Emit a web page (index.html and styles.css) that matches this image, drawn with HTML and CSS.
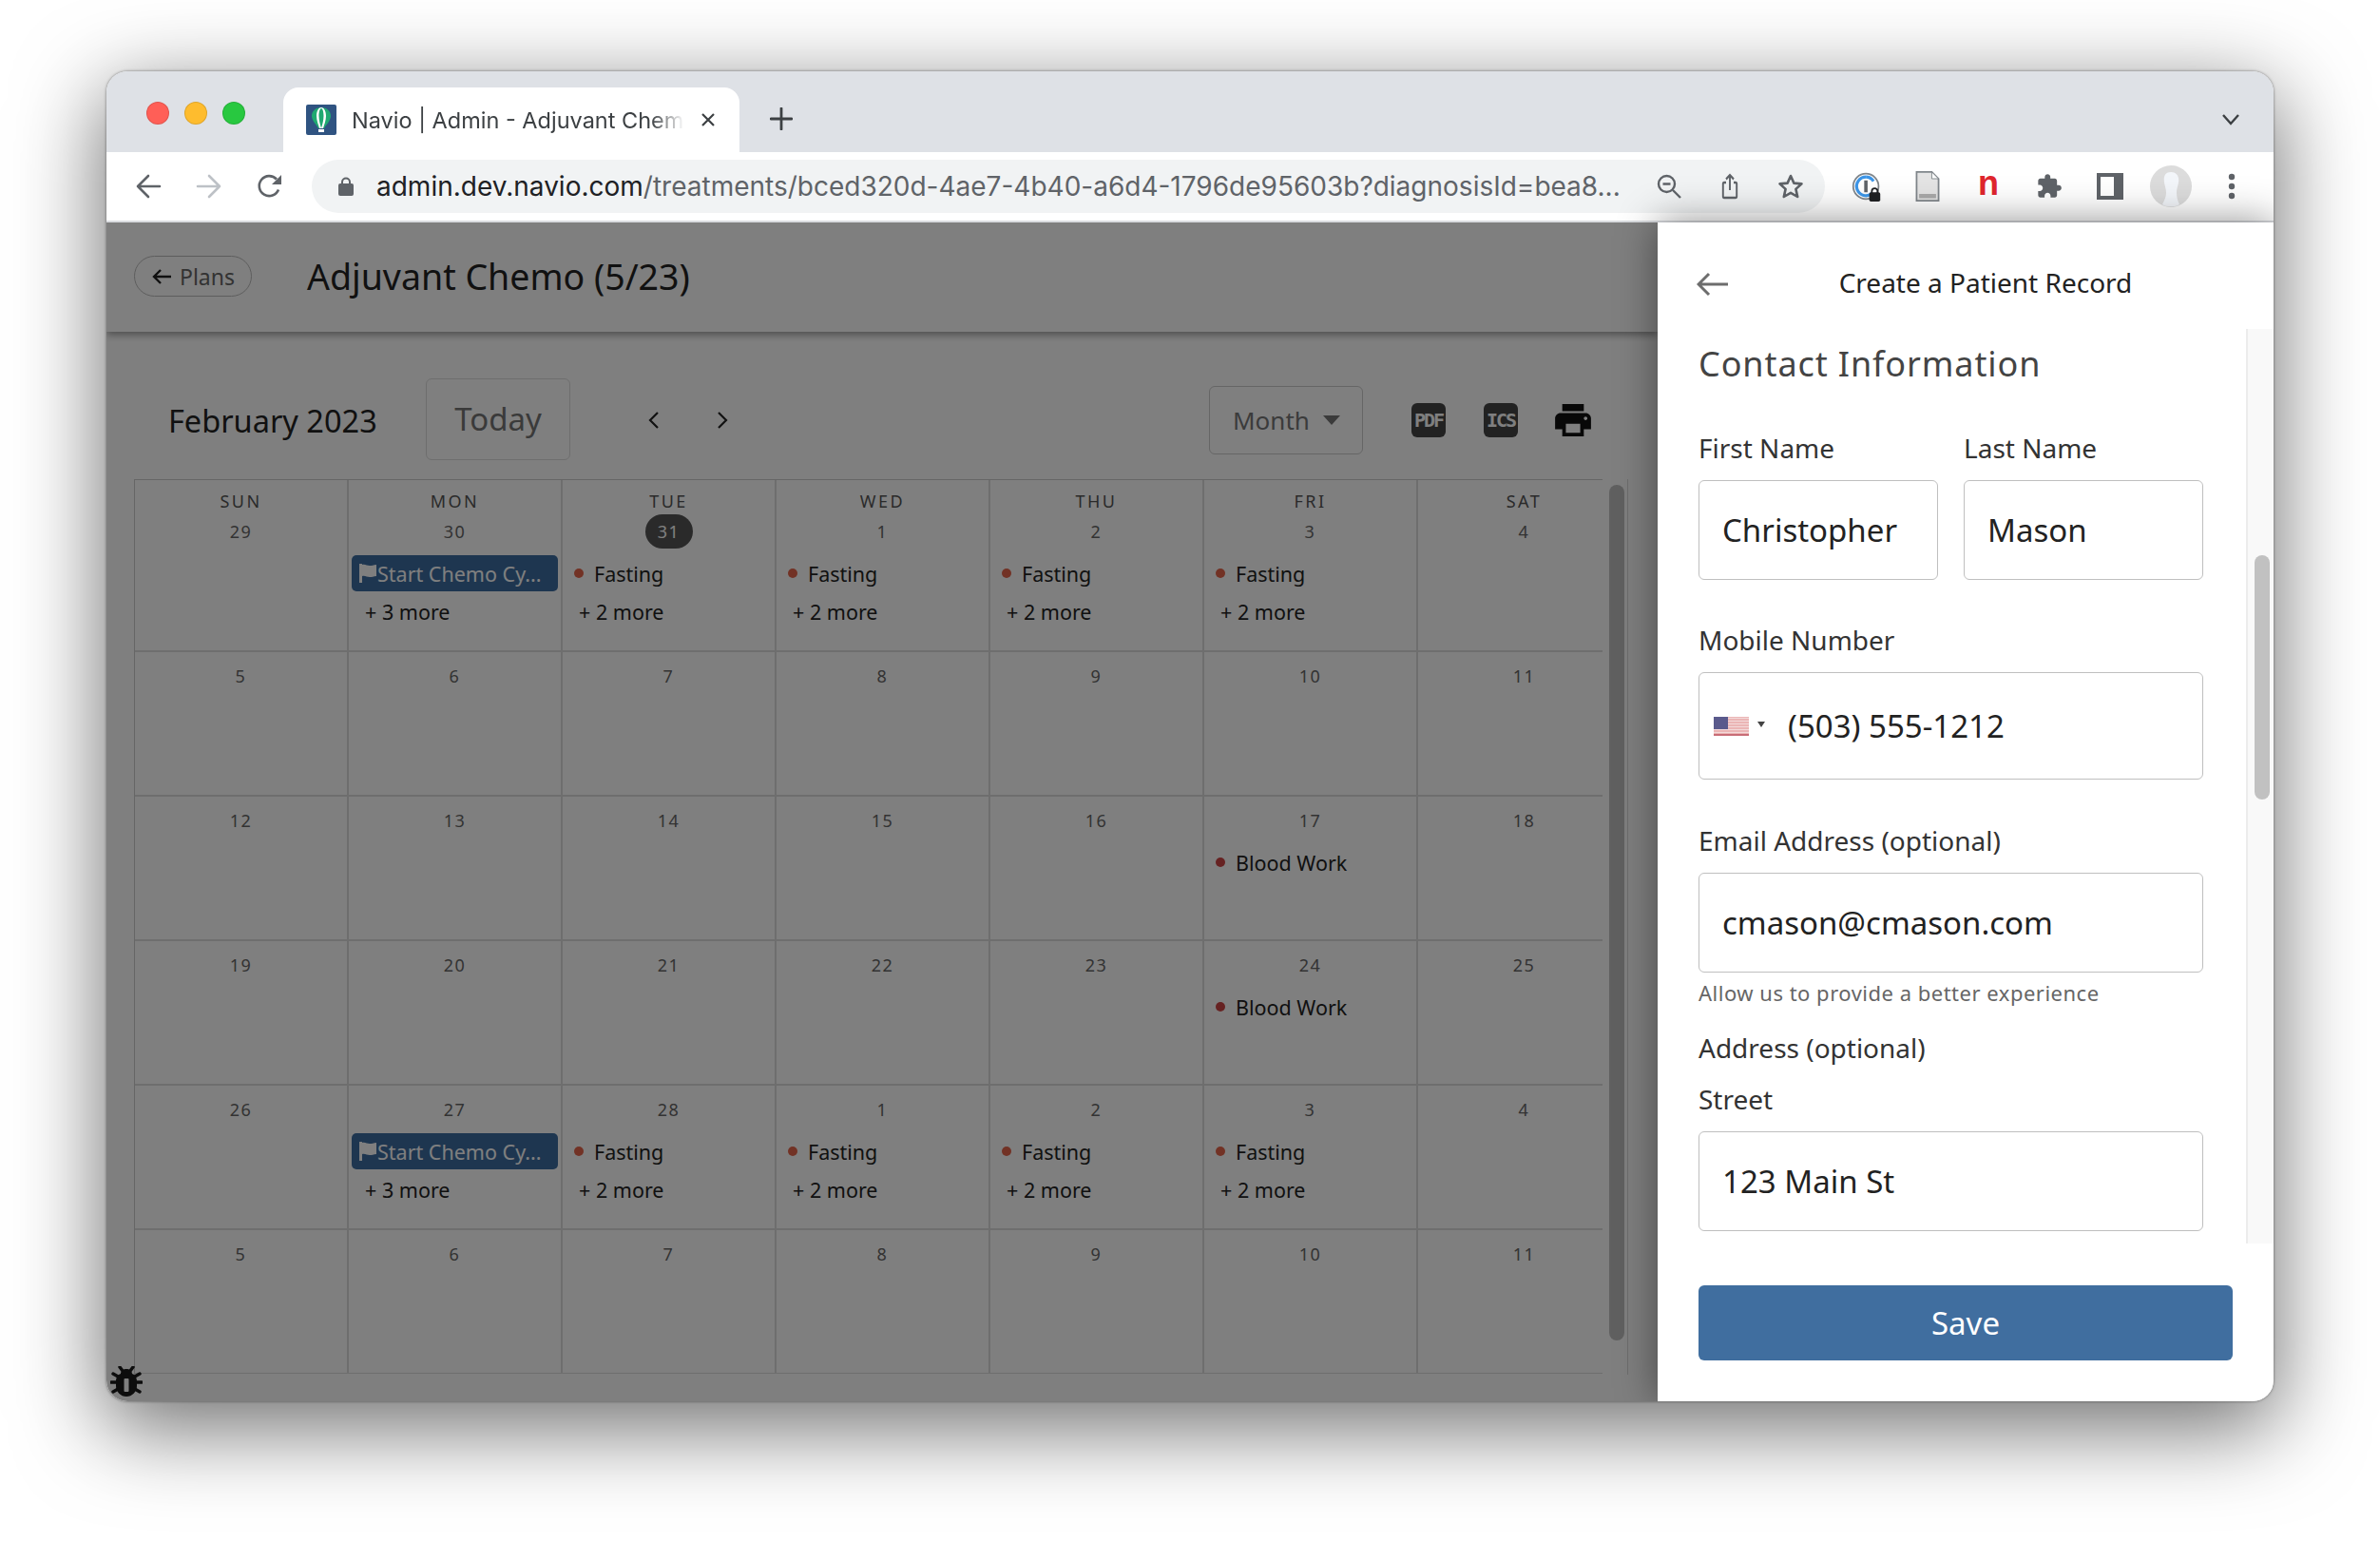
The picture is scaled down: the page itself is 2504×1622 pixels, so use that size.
FILE: index.html
```html
<!DOCTYPE html>
<html lang="en">
<head>
  <meta charset="UTF-8">
  <title>Navio | Admin - Adjuvant Chemo</title>
  <link rel="stylesheet" href="styles.css">
</head>
<body>
  <div class="window">

    <!-- Tab strip -->
    <div class="tabstrip">
      <div class="lights">
        <span class="light red"></span>
        <span class="light yellow"></span>
        <span class="light green"></span>
      </div>
      <div class="tab">
        <svg class="favicon" viewBox="0 0 32 32">
          <rect width="32" height="32" rx="2" fill="#2f5381"/>
          <path d="M16 3C10 3 6 7 6 12c0 5 5 9 7 13h6c2-4 7-8 7-13 0-5-4-9-10-9z" fill="#1fa971"/>
          <path d="M16 3c-3 0-5 4-5 9 0 5 2 9 3 13h4c1-4 3-8 3-13 0-5-2-9-5-9z" fill="#fff"/>
          <path d="M16 4c-1.500 0-2.500 4-2.500 8 0 5 1.500 9 2.500 13 1-4 2.500-8 2.500-13 0-4-1-8-2.500-8z" fill="#1fa971"/>
          <rect x="13" y="26" width="6" height="3" fill="#fff"/>
        </svg>
        <span class="tab-title">Navio | Admin - Adjuvant Chem</span>
        <svg class="tab-close" viewBox="0 0 16 16"><path d="M2 2l12 12M14 2L2 14" stroke="#3c4043" stroke-width="2.200" fill="none"/></svg>
      </div>
      <svg class="new-tab" viewBox="0 0 24 24"><path d="M12 1v22M1 12h22" stroke="#3c4043" stroke-width="2.800" stroke-linecap="round" fill="none"/></svg>
      <svg class="tab-menu" viewBox="0 0 20 14"><path d="M2 2l8 9 8-9" stroke="#3c4043" stroke-width="2.400" fill="none"/></svg>
    </div>

    <!-- Address bar -->
    <div class="toolbar">
      <div class="nav-btns">
        <svg viewBox="0 0 28 28"><path d="M26 14H3M14 3L3 14l11 11" stroke="#5f6368" stroke-width="2.600" stroke-linecap="round" stroke-linejoin="round" fill="none"/></svg>
        <svg viewBox="0 0 28 28"><path d="M2 14h23M14 3l11 11-11 11" stroke="#bdc1c6" stroke-width="2.600" stroke-linecap="round" stroke-linejoin="round" fill="none"/></svg>
        <svg viewBox="0 0 28 28"><path d="M23 17.500A10.500 10.500 0 1 1 21 6.500" stroke="#5f6368" stroke-width="2.600" fill="none"/><path d="M26 2v10H16z" fill="#5f6368"/></svg>
      </div>
      <div class="omnibox">
        <svg class="lock" viewBox="0 0 16 20"><path d="M4 8V5.500a4 4 0 0 1 8 0V8" stroke="#5f6368" stroke-width="2" fill="none"/><rect x="0" y="7" width="16" height="13" rx="2" fill="#5f6368"/></svg>
        <span class="url"><b>admin.dev.navio.com</b>/treatments/bced320d-4ae7-4b40-a6d4-1796de95603b?diagnosisId=bea8...</span>
        <svg class="omni-icon" viewBox="0 0 28 28"><circle cx="11.500" cy="11.500" r="8.500" stroke="#5f6368" stroke-width="2.400" fill="none"/><path d="M7.500 11.500h8M18 18l8 8" stroke="#5f6368" stroke-width="2.400" fill="none"/></svg>
        <svg class="omni-icon" viewBox="0 0 28 28"><path d="M9 10H6.500a1.500 1.500 0 0 0-1.500 1.500v13A1.500 1.500 0 0 0 6.500 26h15a1.500 1.500 0 0 0 1.500-1.500v-13a1.500 1.500 0 0 0-1.500-1.500H19M14 18V2M9 6.500L14 2l5 4.500" stroke="#5f6368" stroke-width="2.400" fill="none" transform="translate(2.800 0) scale(.8 1)"/></svg>
        <svg class="omni-icon" viewBox="0 0 28 28"><path d="M14 3l3.400 7.600 8.100.8-6.100 5.500 1.800 8.100L14 20.800 6.800 25l1.800-8.100-6.100-5.500 8.100-.8z" stroke="#5f6368" stroke-width="2.600" stroke-linejoin="round" fill="none"/></svg>
      </div>
      <div class="ext-icons">
        <svg class="ext" viewBox="0 0 34 36">
          <circle cx="16" cy="18" r="15" stroke="#80868b" stroke-width="2" fill="none"/>
          <path d="M16 7a11 11 0 1 0 7 19.500" stroke="#3d96e8" stroke-width="3.600" fill="none"/>
          <path d="M16 7a11 11 0 0 1 9 5" stroke="#3d96e8" stroke-width="3.600" fill="none"/>
          <rect x="14" y="11" width="4" height="14" fill="#5f6368"/>
          <path d="M23 27v-3a3.500 3.500 0 0 1 7 0v3" stroke="#202124" stroke-width="2" fill="none"/>
          <rect x="20" y="25" width="13" height="11" rx="2" fill="#202124"/>
        </svg>
        <svg class="ext ext-doc" viewBox="0 0 30 36">
          <path d="M2 1h18l8 8v26H2z" fill="#e4e4e4" stroke="#80868b" stroke-width="2"/>
          <path d="M20 1v8h8z" fill="#fff" stroke="#80868b" stroke-width="1"/>
          <rect x="5" y="27" width="20" height="5" fill="#a9a9a9"/>
        </svg>
        <span class="ext-n">n</span>
        <svg class="ext-square" viewBox="0 0 24 24"><path d="M20.500 11H19V7c0-1.100-.9-2-2-2h-4V3.500C13 2.120 11.880 1 10.500 1S8 2.120 8 3.500V5H4c-1.100 0-1.990.9-1.990 2v3.800H3.500c1.490 0 2.700 1.210 2.700 2.700s-1.210 2.700-2.700 2.700H2V20c0 1.100.9 2 2 2h3.800v-1.500c0-1.490 1.210-2.700 2.700-2.700 1.490 0 2.700 1.210 2.700 2.700V22H17c1.100 0 2-.9 2-2v-4h1.500c1.380 0 2.500-1.120 2.500-2.500S21.880 11 20.500 11z" fill="#5f6368"/></svg>
        <svg class="ext-square" viewBox="0 0 28 28"><rect width="28" height="28" fill="#5f6368"/><rect x="4" y="4" width="14" height="20" fill="#fff"/></svg>
        <svg class="avatar" viewBox="0 0 44 44">
          <circle cx="22" cy="22" r="22" fill="#dcdcdc"/>
          <path d="M22 7c-6 0-8 4-7 11 1 5 2 7 2 11 0 4-2 8-4 12 3 3 15 3 18 0-2-4-3-8-3-12 0-4 1-6 2-11 1-7-2-11-8-11z" fill="#f3f6fa"/>
        </svg>
        <svg class="ext-dots" viewBox="0 0 8 28"><circle cx="4" cy="4" r="3.200" fill="#5f6368"/><circle cx="4" cy="14" r="3.200" fill="#5f6368"/><circle cx="4" cy="24" r="3.200" fill="#5f6368"/></svg>
      </div>
    </div>

    <div class="content">

      <!-- Plan calendar, dimmed behind the drawer -->
      <main class="main">
        <header class="page-head">
          <a class="back-pill">
            <svg class="pill-arrow" viewBox="0 0 22 18"><path d="M21 9H3M10 2L3 9l7 7" stroke="#222" stroke-width="2.400" fill="none"/></svg>
            Plans
          </a>
          <h1>Adjuvant Chemo (5/23)</h1>
        </header>

        <div class="cal-bar">
          <span class="cal-month">February 2023</span>
          <button class="btn-today">Today</button>
          <svg class="chev chev-prev" viewBox="0 0 12 20"><path d="M10 2L2 10l8 8" stroke="#222" stroke-width="2.200" fill="none"/></svg>
          <svg class="chev" viewBox="0 0 12 20"><path d="M2 2l8 8-8 8" stroke="#222" stroke-width="2.200" fill="none"/></svg>
          <div class="cal-bar-right">
            <div class="view-select">Month <span class="caret"></span></div>
            <span class="file-icon">PDF</span>
            <span class="file-icon">ICS</span>
            <svg class="printer" viewBox="2 3 20 18"><path d="M19 8H5c-1.660 0-3 1.340-3 3v6h4v4h12v-4h4v-6c0-1.660-1.340-3-3-3zm-3 11H8v-5h8v5zm3-7c-.55 0-1-.45-1-1s.45-1 1-1 1 .45 1 1-.45 1-1 1zm-1-9H6v4h12V3z" fill="#111"/></svg>
          </div>
        </div>

        <div class="cal-wrap">
          <div class="cal-clip">
            <div class="cal-grid">
              <div class="cell first"><span class="dow">Sun</span><span class="num">29</span></div>
              <div class="cell first"><span class="dow">Mon</span><span class="num">30</span>
                <div class="chip"><svg viewBox="0 0 18 20"><path d="M0 0h3v1c3-1 5 1 8 1 2 0 4-.5 7-1v12c-3 .5-5 1-7 1-3 0-5-2-8-1v7H0z" fill="#fff"/></svg>Start Chemo Cy...</div>
                <div class="more">+ 3 more</div></div>
              <div class="cell first"><span class="dow">Tue</span><span class="num today">31</span>
                <div class="event"><i class="dot"></i>Fasting</div><div class="more">+ 2 more</div></div>
              <div class="cell first"><span class="dow">Wed</span><span class="num">1</span>
                <div class="event"><i class="dot"></i>Fasting</div><div class="more">+ 2 more</div></div>
              <div class="cell first"><span class="dow">Thu</span><span class="num">2</span>
                <div class="event"><i class="dot"></i>Fasting</div><div class="more">+ 2 more</div></div>
              <div class="cell first"><span class="dow">Fri</span><span class="num">3</span>
                <div class="event"><i class="dot"></i>Fasting</div><div class="more">+ 2 more</div></div>
              <div class="cell first"><span class="dow">Sat</span><span class="num">4</span></div>

              <div class="cell"><span class="num">5</span></div>
              <div class="cell"><span class="num">6</span></div>
              <div class="cell"><span class="num">7</span></div>
              <div class="cell"><span class="num">8</span></div>
              <div class="cell"><span class="num">9</span></div>
              <div class="cell"><span class="num">10</span></div>
              <div class="cell"><span class="num">11</span></div>

              <div class="cell"><span class="num">12</span></div>
              <div class="cell"><span class="num">13</span></div>
              <div class="cell"><span class="num">14</span></div>
              <div class="cell"><span class="num">15</span></div>
              <div class="cell"><span class="num">16</span></div>
              <div class="cell"><span class="num">17</span>
                <div class="event"><i class="dot dark"></i>Blood Work</div></div>
              <div class="cell"><span class="num">18</span></div>

              <div class="cell"><span class="num">19</span></div>
              <div class="cell"><span class="num">20</span></div>
              <div class="cell"><span class="num">21</span></div>
              <div class="cell"><span class="num">22</span></div>
              <div class="cell"><span class="num">23</span></div>
              <div class="cell"><span class="num">24</span>
                <div class="event"><i class="dot dark"></i>Blood Work</div></div>
              <div class="cell"><span class="num">25</span></div>

              <div class="cell"><span class="num">26</span></div>
              <div class="cell"><span class="num">27</span>
                <div class="chip"><svg viewBox="0 0 18 20"><path d="M0 0h3v1c3-1 5 1 8 1 2 0 4-.5 7-1v12c-3 .5-5 1-7 1-3 0-5-2-8-1v7H0z" fill="#fff"/></svg>Start Chemo Cy...</div>
                <div class="more">+ 3 more</div></div>
              <div class="cell"><span class="num">28</span>
                <div class="event"><i class="dot"></i>Fasting</div><div class="more">+ 2 more</div></div>
              <div class="cell"><span class="num">1</span>
                <div class="event"><i class="dot"></i>Fasting</div><div class="more">+ 2 more</div></div>
              <div class="cell"><span class="num">2</span>
                <div class="event"><i class="dot"></i>Fasting</div><div class="more">+ 2 more</div></div>
              <div class="cell"><span class="num">3</span>
                <div class="event"><i class="dot"></i>Fasting</div><div class="more">+ 2 more</div></div>
              <div class="cell"><span class="num">4</span></div>

              <div class="cell last"><span class="num">5</span></div>
              <div class="cell last"><span class="num">6</span></div>
              <div class="cell last"><span class="num">7</span></div>
              <div class="cell last"><span class="num">8</span></div>
              <div class="cell last"><span class="num">9</span></div>
              <div class="cell last"><span class="num">10</span></div>
              <div class="cell last"><span class="num">11</span></div>
            </div>
          </div>
          <div class="cal-scroll"><div class="cal-thumb"></div></div>
        </div>

        <div class="overlay"></div>
        <svg class="bug" viewBox="0 0 34 32">
          <path d="M10 1l3 4M24 1l-3 4M1 17h32M3 8l7 4M31 8l-7 4M3 27l7-4M31 27l-7-4" stroke="#0d0d0d" stroke-width="3.400" stroke-linecap="round" fill="none"/>
          <path d="M17 3c-3 0-6 2-6 5-3 1-5 4-5 8v5c0 6 5 11 11 11s11-5 11-11v-5c0-4-2-7-5-8 0-3-3-5-6-5z" fill="#0d0d0d"/>
          <rect x="14.500" y="13" width="5" height="14" rx="1" fill="#7f7f7f"/>
        </svg>
      </main>

      <!-- Drawer -->
      <aside class="drawer">
        <div class="drawer-head">
          <svg class="drawer-back" viewBox="0 0 34 26"><path d="M33 13H3M13 2L2 13l11 11" stroke="#6d6d6d" stroke-width="3" fill="none"/></svg>
          <span class="drawer-title">Create a Patient Record</span>
        </div>

        <div class="drawer-scroll">
          <form class="patient-form">
            <h2>Contact Information</h2>
            <div class="name-row">
              <div class="field">
                <label>First Name</label>
                <input type="text" value="Christopher">
              </div>
              <div class="field">
                <label>Last Name</label>
                <input type="text" value="Mason">
              </div>
            </div>

            <label class="label-mobile">Mobile Number</label>
            <div class="phone-box">
              <svg class="flag" viewBox="0 0 37 20">
                <rect width="37" height="20" fill="#e8a8a8"/>
                <path d="M0 1.500h37M0 4.500h37M0 7.500h37M0 10.500h37M0 13.500h37M0 16.500h37" stroke="#f3d9d9" stroke-width="1.400"/>
                <rect y="18" width="37" height="2" fill="#c96d76"/>
                <rect width="15" height="13" fill="#5a5a8c"/>
              </svg>
              <span class="flag-caret"></span>
              <input type="tel" value="(503) 555-1212">
            </div>

            <label class="label-email">Email Address (optional)</label>
            <input class="wide" type="email" value="cmason@cmason.com">
            <p class="help">Allow us to provide a better experience</p>

            <div class="address-title">Address (optional)</div>
            <label class="label-street">Street</label>
            <input class="wide" type="text" value="123 Main St">
          </form>
          <div class="drawer-bar"><div class="drawer-thumb"></div></div>
        </div>

        <div class="drawer-foot">
          <button class="btn-save" type="button">Save</button>
        </div>
      </aside>
    </div>
  </div>
</body>
</html>
```

FILE: styles.css
```css
body {
  margin: 0;
  height: 1622px;
  box-sizing: border-box;
  padding: 75px 0 0 112px;
  overflow: hidden;
  background: #fff;
  font-family: "Noto Sans", "Open Sans", sans-serif;
  color: #222;
}

.window {
  width: 2280px;
  height: 1399px;
  display: flex;
  flex-direction: column;
  border-radius: 22px;
  overflow: hidden;
  box-shadow: 0 25px 90px 4px rgba(0, 0, 0, 0.56), 0 0 3px rgba(0, 0, 0, 0.5);
}

/* Tab strip */
.tabstrip {
  height: 85px;
  flex: none;
  display: flex;
  align-items: flex-end;
  background: #dee1e6;
  position: relative;
}

.lights {
  display: flex;
  gap: 16px;
  margin: 0 0 29px 42px;
  align-self: flex-end;
}

.light {
  width: 24px;
  height: 24px;
  border-radius: 50%;
  box-sizing: border-box;
  border: 1px solid rgba(0, 0, 0, 0.12);
}
.red { background: #ff5f57; }
.yellow { background: #febc2e; }
.green { background: #28c840; }

.tab {
  width: 480px;
  height: 68px;
  margin-left: 40px;
  box-sizing: border-box;
  padding: 0 16px 0 24px;
  display: flex;
  align-items: center;
  background: #fff;
  border-radius: 16px 16px 0 0;
}

.favicon {
  width: 32px;
  height: 32px;
  flex: none;
}

.tab-title {
  width: 350px;
  margin-left: 16px;
  flex: none;
  font-family: Inter, Roboto, sans-serif;
  font-size: 23.500px;
  color: #3c4043;
  white-space: nowrap;
  -webkit-mask-image: linear-gradient(to right, #000 90%, transparent);
  mask-image: linear-gradient(to right, #000 90%, transparent);
}

.tab-close {
  width: 16px;
  height: 18px;
  margin-left: 17px;
}

.new-tab {
  width: 24px;
  height: 24px;
  margin: 0 0 23px 32px;
}

.tab-menu {
  width: 20px;
  height: 14px;
  margin: 0 35px 27px auto;
}

/* Toolbar */
.toolbar {
  height: 72px;
  flex: none;
  display: flex;
  align-items: center;
  background: #fff;
  border-bottom: 2px solid #dadce0;
}

.nav-btns {
  width: 216px;
  flex: none;
  display: flex;
  gap: 36px;
  padding-left: 30px;
  box-sizing: border-box;
}

.nav-btns svg {
  width: 28px;
  height: 28px;
}

.omnibox {
  width: 1592px;
  height: 56px;
  flex: none;
  display: flex;
  align-items: center;
  padding-left: 28px;
  box-sizing: border-box;
  background: #f1f3f4;
  border-radius: 28px;
}

.lock {
  width: 16px;
  height: 20px;
  flex: none;
}

.url {
  width: 1346px;
  margin-left: 24px;
  flex: none;
  font-family: Inter, Roboto, sans-serif;
  font-size: 28px;
  color: #5f6368;
  white-space: nowrap;
}

.url b {
  font-weight: 400;
  color: #202124;
}

.omni-icon {
  width: 28px;
  height: 28px;
  margin-right: 36px;
  flex: none;
}

.ext-icons {
  flex: 1;
  display: grid;
  grid-template-columns: repeat(7, 64px);
  justify-content: start;
  justify-items: center;
  align-items: center;
  padding-left: 12px;
}

.ext {
  width: 32px;
  height: 32px;
}

.ext-doc {
  width: 28px;
}

.ext-n {
  font-family: "Liberation Sans", sans-serif;
  font-size: 36px;
  font-weight: 700;
  line-height: 36px;
  color: #e0262e;
  margin-top: -6px;
}

.ext-square {
  width: 28px;
  height: 28px;
}

.avatar {
  width: 44px;
  height: 44px;
}

.ext-dots {
  width: 8px;
  height: 28px;
}

/* Content */
.content {
  flex: 1;
  display: flex;
  min-height: 0;
}

.main {
  width: 1632px;
  flex: none;
  position: relative;
  background: #fff;
  overflow: hidden;
}

.overlay {
  position: absolute;
  inset: 0;
  background: rgba(0, 0, 0, 0.5);
}

.bug {
  position: absolute;
  left: 4px;
  bottom: 5px;
  width: 34px;
  height: 32px;
}

.page-head {
  height: 115px;
  display: flex;
  align-items: center;
  padding-left: 29px;
  box-sizing: border-box;
  background: #fff;
  box-shadow: 0 3px 8px rgba(0, 0, 0, 0.4);
}

.back-pill {
  width: 124px;
  height: 43px;
  margin-bottom: 2px;
  box-sizing: border-box;
  display: flex;
  align-items: center;
  justify-content: center;
  gap: 8px;
  border: 1px solid #bbb;
  border-radius: 22px;
  font-size: 23px;
  color: #666;
}

.pill-arrow {
  width: 22px;
  height: 18px;
  flex: none;
}

.page-head h1 {
  margin: 0 0 2px 58px;
  font-size: 37.500px;
  font-weight: 400;
  color: #222;
}

/* Calendar bar */
.cal-bar {
  height: 155px;
  box-sizing: border-box;
  padding: 32px 0 0 65px;
  display: flex;
  align-items: center;
}

.cal-month {
  width: 271px;
  font-size: 32.500px;
  flex: none;
}

.btn-today {
  width: 152px;
  height: 86px;
  margin-top: -4px;
  flex: none;
  background: #fff;
  border: 1px solid #ddd;
  border-radius: 6px;
  font-family: inherit;
  font-size: 33px;
  color: #757575;
}

.chev {
  width: 12px;
  height: 20px;
  flex: none;
  margin-top: -2px;
  margin-left: 60px;
}

.chev-prev {
  margin-left: 82px;
}

.cal-bar-right {
  display: flex;
  align-items: center;
  margin: -2px 0 0 506px;
}

.view-select {
  width: 162px;
  height: 72px;
  box-sizing: border-box;
  display: flex;
  align-items: center;
  padding-left: 24px;
  gap: 14px;
  border: 1px solid #ccc;
  border-radius: 6px;
  font-size: 26px;
  color: #777;
}

.caret {
  width: 0;
  height: 0;
  border-left: 9px solid transparent;
  border-right: 9px solid transparent;
  border-top: 10px solid #777;
}

.file-icon {
  width: 36px;
  height: 36px;
  display: flex;
  align-items: center;
  justify-content: center;
  background: #444;
  border-radius: 6px;
  font-family: "DejaVu Sans Mono", monospace;
  font-size: 20px;
  font-weight: 700;
  letter-spacing: -2px;
  color: #fff;
}

.view-select + .file-icon { margin-left: 51px; }
.file-icon + .file-icon { margin-left: 40px; }

.printer {
  width: 38px;
  height: 34px;
  margin-left: 39px;
}

/* Calendar grid */
.cal-wrap {
  display: flex;
  margin-left: 29px;
  height: 942px;
}

.cal-clip {
  width: 1545px;
  height: 942px;
  overflow: hidden;
  border-top: 1px solid #ccc;
  border-left: 1px solid #ccc;
  box-sizing: border-box;
}

.cal-grid {
  width: 1575px;
  display: grid;
  grid-template-columns: repeat(7, 225px);
  grid-template-rows: 181px repeat(4, 152px) 151px;
}

.cell {
  box-sizing: border-box;
  display: flex;
  flex-direction: column;
  align-items: stretch;
  padding-top: 7px;
  border-right: 2px solid #ddd;
  border-bottom: 2px solid #ddd;
}

.cell.first {
  padding-top: 10px;
}

.cell.last {
  border-bottom-width: 1px;
}

.dow {
  height: 24px;
  margin-bottom: 2px;
  text-align: center;
  font-size: 18px;
  line-height: 24px;
  letter-spacing: 2.500px;
  text-transform: uppercase;
  color: #555;
}

.num {
  align-self: center;
  min-width: 50px;
  height: 36px;
  text-align: center;
  font-size: 18px;
  line-height: 36px;
  letter-spacing: 1.500px;
  color: #666;
  border-radius: 18px;
}

.num.today {
  background: #555;
  color: #fff;
}

.chip {
  height: 38px;
  margin: 7px 3px 0 3px;
  display: flex;
  align-items: center;
  gap: 1px;
  padding-left: 8px;
  background: #3d6da1;
  border-radius: 5px;
  font-size: 21.500px;
  color: #fff;
  white-space: nowrap;
}

.chip svg {
  width: 18px;
  height: 20px;
  flex: none;
}

.event {
  height: 38px;
  margin-top: 7px;
  display: flex;
  align-items: center;
  padding-left: 12px;
  font-size: 21.500px;
  color: #222;
}

.dot {
  width: 10px;
  height: 10px;
  margin-right: 11px;
  border-radius: 50%;
  background: #e4654b;
}

.dot.dark {
  background: #c44;
}

.more {
  margin-top: 7px;
  padding-left: 17px;
  font-size: 21.500px;
  line-height: 30px;
  color: #222;
}

.cal-scroll {
  width: 27px;
  flex: none;
  box-sizing: border-box;
  padding: 6px 0 0 7px;
  border-right: 1px solid #ddd;
}

.cal-thumb {
  width: 16px;
  height: 900px;
  background: #c1c1c1;
  border-radius: 8px;
}

/* Drawer */
.drawer {
  flex: 1;
  display: flex;
  flex-direction: column;
  position: relative;
  background: #fff;
  box-shadow: 0 0 40px rgba(0, 0, 0, 0.45);
}

.drawer-head {
  height: 112px;
  flex: none;
  position: relative;
  display: flex;
  align-items: center;
  justify-content: center;
  padding: 14px 0 0 42px;
  box-sizing: border-box;
}

.drawer-back {
  position: absolute;
  left: 41px;
  top: 52px;
  width: 34px;
  height: 26px;
}

.drawer-title {
  font-size: 28px;
  color: #222;
}

.drawer-scroll {
  height: 962px;
  flex: none;
  display: flex;
  overflow: hidden;
}

.patient-form {
  width: 619px;
  flex: none;
  box-sizing: border-box;
  padding-left: 43px;
}

.patient-form h2 {
  margin: 0;
  height: 46px;
  padding-top: 14px;
  font-size: 36px;
  line-height: 46px;
  letter-spacing: 0.900px;
  font-weight: 400;
  color: #444;
}

.name-row {
  display: flex;
  gap: 27px;
  margin-top: 47px;
}

.field {
  width: 252px;
}

.patient-form label,
.address-title {
  display: block;
  height: 36px;
  font-size: 28px;
  line-height: 36px;
  color: #333;
}

.patient-form input {
  display: block;
  width: 100%;
  height: 105px;
  margin-top: 16px;
  box-sizing: border-box;
  padding: 0 24px;
  border: 1px solid #bfbfbf;
  border-radius: 6px;
  font-family: inherit;
  font-size: 33px;
  color: #222;
}

.patient-form input.wide {
  width: 531px;
}

.label-mobile {
  margin-top: 45px;
}

.phone-box {
  width: 531px;
  height: 113px;
  margin-top: 16px;
  box-sizing: border-box;
  display: flex;
  align-items: center;
  padding-left: 15px;
  border: 1px solid #bfbfbf;
  border-radius: 6px;
}

.flag {
  width: 37px;
  height: 20px;
  flex: none;
}

.flag-caret {
  width: 0;
  height: 0;
  margin: -3px 0 0 9px;
  flex: none;
  border-left: 4px solid transparent;
  border-right: 4px solid transparent;
  border-top: 6px solid #444;
}

.patient-form .phone-box input {
  height: 60px;
  margin: 0 0 0 24px;
  padding: 0;
  border: none;
  width: 380px;
}

.label-email {
  margin-top: 46px;
}

.help {
  margin: 6px 0 0;
  font-size: 22px;
  line-height: 30px;
  letter-spacing: 0.500px;
  color: #666;
}

.address-title {
  margin-top: 25px;
}

.label-street {
  margin-top: 18px;
}

.drawer-bar {
  width: 29px;
  flex: none;
  box-sizing: border-box;
  padding: 238px 0 0 7px;
  background: #f9f9f9;
  border-left: 2px solid #ececec;
}

.drawer-thumb {
  width: 16px;
  height: 257px;
  background: #c1c1c1;
  border-radius: 8px;
}

.drawer-foot {
  flex: 1;
  padding: 44px 0 0 43px;
}

.btn-save {
  width: 562px;
  height: 79px;
  border: none;
  border-radius: 6px;
  background: #406e9f;
  font-family: inherit;
  font-size: 33px;
  color: #fff;
}
```
